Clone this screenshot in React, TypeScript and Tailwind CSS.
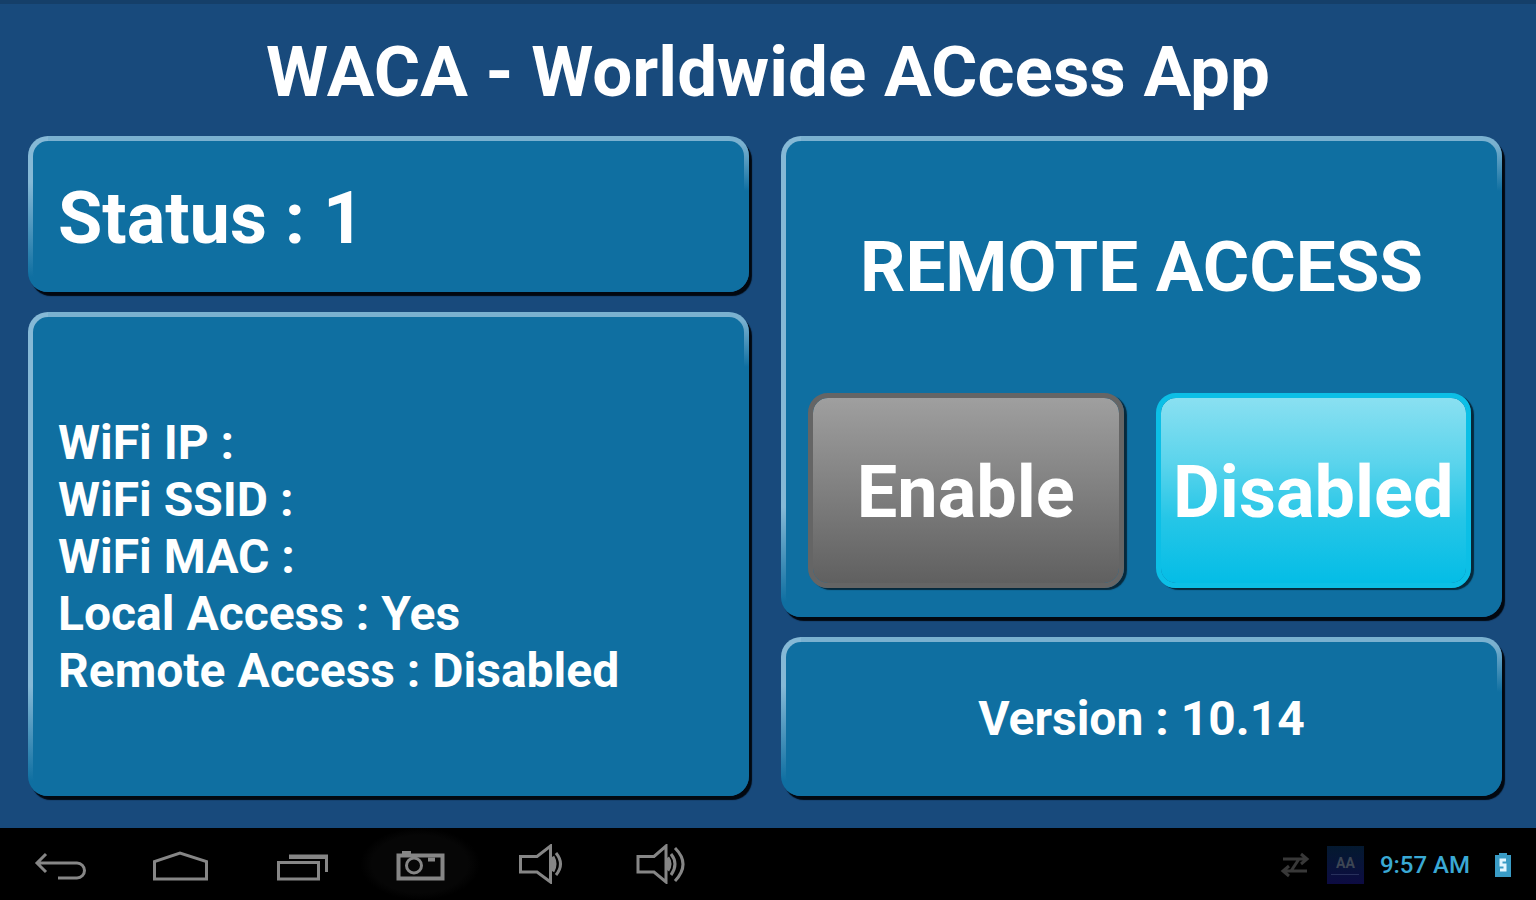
import React, { useState } from 'react';

const infoRows = [
  { label: 'WiFi IP', value: '' },
  { label: 'WiFi SSID', value: '' },
  { label: 'WiFi MAC', value: '' },
  { label: 'Local Access', value: 'Yes' },
];

// Bevelled box: light edge on the top and left, hard black shadow to the bottom right
const Panel: React.FC<{ className?: string; children: React.ReactNode }> = ({ className = '', children }) => (
  <section
    className={`flex flex-col rounded-[20px] border-[5px] border-transparent shadow-[3px_4px_1px_#020810] [background:linear-gradient(#0f6fa1,#0f6fa1)_padding-box,linear-gradient(to_bottom,#86b9d6_20px,#86b9d6_calc(100%-110px),#0f6fa1_calc(100%-15px))_left/20px_100%_no-repeat_border-box,linear-gradient(to_bottom,#7ab1d0_8px,#0f6fa1_55px)_border-box] ${className}`}
  >
    {children}
  </section>
);

const NavButton: React.FC<{ label: string; className?: string; children: React.ReactNode }> = ({
  label,
  className = '',
  children,
}) => (
  <button aria-label={label} className={`flex w-[120px] items-center justify-center text-[#868686] ${className}`}>
    <svg width="60" height="40" viewBox="0 0 60 40" fill="none" stroke="currentColor" strokeWidth="3">
      {children}
    </svg>
  </button>
);

const SystemBar = () => (
  <footer className="flex h-[72px] items-stretch justify-between bg-black">
    <nav className="flex">
      <NavButton label="Back">
        <path d="M16 10L7 19l9 9M7 19h40a7.5 7.5 0 0 1 0 15H28" />
      </NavButton>
      <NavButton label="Home">
        <path d="M4.5 35V17.5L30 9l26.5 8.5V35z" />
      </NavButton>
      <NavButton label="Recent apps">
        <path d="M8.5 18.5h40V35h-40z" />
        <path d="M19 12h37.5v16" />
        <path d="M19 13.5h37" />
      </NavButton>
      <NavButton label="Screenshot" className="bg-[radial-gradient(closest-side,#060606_80%,#000000)]">
        <path d="M8.5 11.5h44v23h-44z" strokeWidth="4" />
        <circle cx="24" cy="21.5" r="7.5" />
        <path d="M12 9h9M38 15.5h7" strokeWidth="4" />
      </NavButton>
      <NavButton label="Volume down">
        <path d="M10.5 12.5H27L40.5 2v36L27 28H10.5z" />
        <path d="M42 13q4 7 0 14" strokeWidth="5" />
        <path d="M46 9q9 11 0 22" />
      </NavButton>
      <NavButton label="Volume up">
        <path d="M8 12.5h16L36 2v36L24 28H8z" />
        <path d="M37 14q4 6 0 12" strokeWidth="5" />
        <path d="M41 10q8 10 0 21" />
        <path d="M45 4q16 16 0 33" />
      </NavButton>
    </nav>
    <div className="flex items-center gap-4 pt-[2px] pr-6">
      <svg width="32" height="28" viewBox="0 0 32 28" fill="none" stroke="#383838" strokeWidth="3">
        <path d="M4 8h24M22 3l6 5-6 5M28 20H4M10 15l-6 5 6 5M20 8l-8 12" />
      </svg>
      <span className="flex h-[38px] w-[37px] flex-col items-center justify-center gap-1 bg-linear-to-b from-[#04192f] to-[#0d0b42] text-[14px] leading-[14px] font-bold text-[#3d4654]">
        AA
        <span className="h-px w-7 bg-[#28305c]" />
      </span>
      <time className="text-[24px] leading-[28px] font-medium text-[#3aa9d4]">9:57 AM</time>
      <svg width="18" height="26" viewBox="0 0 18 26" className="ml-2">
        <path d="M1 3h4V1h8v2h4v22H1z" fill="#3a9cc6" />
        <path d="M12 8H7v5h4v5H6" fill="none" stroke="#e4f6ff" strokeWidth="3" />
      </svg>
    </div>
  </footer>
);

export default function App() {
  const [remoteEnabled, setRemoteEnabled] = useState(false);

  const buttonBase = 'flex-1 rounded-[20px] border-[5px] pt-1 text-center shadow-[3px_2px_1px_#06293c]';
  const activeButton =
    'border-[#0cbfe6] [background:linear-gradient(#8ae0f1,#5bd4ec_35%,#26c6e7_65%,#04bde6)_padding-box]';
  const idleButton = 'border-[#656565] [background:linear-gradient(#9f9f9f,#606060)_padding-box]';

  return (
    <div className="flex min-h-screen flex-col bg-[#184a7c] font-[Roboto,sans-serif] font-bold text-white">
      <h1 className="border-t-4 border-[#153f69] pt-[26px] pb-[22px] text-center text-[71px] leading-[84px]">
        WACA - Worldwide ACcess App
      </h1>

      <main className="grid flex-1 grid-cols-2 gap-8 pr-[34px] pb-8 pl-7 text-[48px] leading-[57px]">
        <div className="flex flex-col gap-5">
          <Panel className="px-[25px] pt-9 pb-[26px]">
            <h2 className="text-[72px] leading-[84px]">Status : 1</h2>
          </Panel>
          <Panel className="flex-1 justify-center px-[25px] pt-1">
            {infoRows.map((row) => (
              <p key={row.label}>
                {row.label} : {row.value}
              </p>
            ))}
            <p>Remote Access : {remoteEnabled ? 'Enabled' : 'Disabled'}</p>
          </Panel>
        </div>

        <div className="flex flex-col gap-5">
          <Panel className="flex-1 pr-[26px] pb-6 pl-[22px] text-[72px] leading-[84px]">
            <h2 className="flex flex-1 items-center justify-center pl-1 text-[71px]">REMOTE ACCESS</h2>
            <div className="flex h-[195px] gap-8">
              <button
                onClick={() => setRemoteEnabled(true)}
                className={`${buttonBase} ${remoteEnabled ? activeButton : idleButton}`}
              >
                {remoteEnabled ? 'Enabled' : 'Enable'}
              </button>
              <button
                onClick={() => setRemoteEnabled(false)}
                className={`${buttonBase} ${remoteEnabled ? idleButton : activeButton}`}
              >
                {remoteEnabled ? 'Disable' : 'Disabled'}
              </button>
            </div>
          </Panel>
          <Panel className="pt-12 pb-11 text-center">
            <p>Version : 10.14</p>
          </Panel>
        </div>
      </main>

      <SystemBar />
    </div>
  );
}
